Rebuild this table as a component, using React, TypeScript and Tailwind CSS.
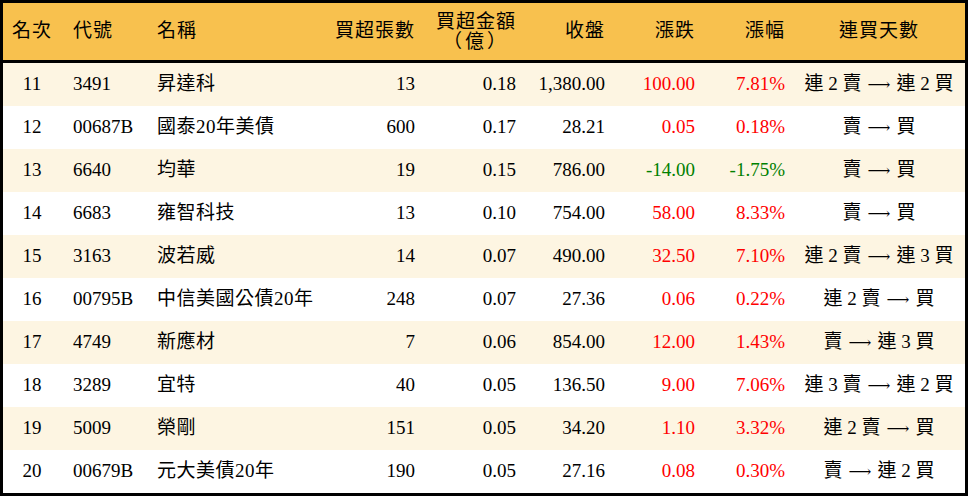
import React from "react";

type Row = {
  rank: number;
  code: string;
  name: string;
  lots: string;
  amount: string;
  close: string;
  change: string;
  pct: string;
  from: string;
  to: string;
};

const rows: Row[] = [
  { rank: 11, code: "3491", name: "昇達科", lots: "13", amount: "0.18", close: "1,380.00", change: "100.00", pct: "7.81%", from: "連 2 賣", to: "連 2 買" },
  { rank: 12, code: "00687B", name: "國泰20年美債", lots: "600", amount: "0.17", close: "28.21", change: "0.05", pct: "0.18%", from: "賣", to: "買" },
  { rank: 13, code: "6640", name: "均華", lots: "19", amount: "0.15", close: "786.00", change: "-14.00", pct: "-1.75%", from: "賣", to: "買" },
  { rank: 14, code: "6683", name: "雍智科技", lots: "13", amount: "0.10", close: "754.00", change: "58.00", pct: "8.33%", from: "賣", to: "買" },
  { rank: 15, code: "3163", name: "波若威", lots: "14", amount: "0.07", close: "490.00", change: "32.50", pct: "7.10%", from: "連 2 賣", to: "連 3 買" },
  { rank: 16, code: "00795B", name: "中信美國公債20年", lots: "248", amount: "0.07", close: "27.36", change: "0.06", pct: "0.22%", from: "連 2 賣", to: "買" },
  { rank: 17, code: "4749", name: "新應材", lots: "7", amount: "0.06", close: "854.00", change: "12.00", pct: "1.43%", from: "賣", to: "連 3 買" },
  { rank: 18, code: "3289", name: "宜特", lots: "40", amount: "0.05", close: "136.50", change: "9.00", pct: "7.06%", from: "連 3 賣", to: "連 2 買" },
  { rank: 19, code: "5009", name: "榮剛", lots: "151", amount: "0.05", close: "34.20", change: "1.10", pct: "3.32%", from: "連 2 賣", to: "買" },
  { rank: 20, code: "00679B", name: "元大美債20年", lots: "190", amount: "0.05", close: "27.16", change: "0.08", pct: "0.30%", from: "賣", to: "連 2 買" },
];

export default function App() {
  return (
    <div
      className="w-[968px] h-[496px] border-[3px] border-black bg-white text-black text-[19px] overflow-hidden whitespace-nowrap"
      style={{ fontFamily: "'Liberation Serif', 'Noto Sans CJK TC', serif" }}
    >
      <div className="flex h-[60px] items-center bg-[#f8c14e] border-b-[3px] border-black tracking-[1px]">
        <div className="w-[58px] text-center">名次</div>
        <div className="w-[94px] pl-[12px]">代號</div>
        <div className="w-[150px] pl-[2px]">名稱</div>
        <div className="w-[110px] text-right">買超張數</div>
        <div className="w-[101px] flex justify-end">
          <div className="flex flex-col items-center leading-[20px]">
            <span>買超金額</span>
            <span className="tracking-[3px]">（億）</span>
          </div>
        </div>
        <div className="w-[89px] text-right">收盤</div>
        <div className="w-[90px] text-right">漲跌</div>
        <div className="w-[90px] text-right">漲幅</div>
        <div className="flex-1 pl-[8px] text-center">連買天數</div>
      </div>

      {rows.map((row, i) => {
        const color = row.change.startsWith("-") ? "text-[#008000]" : "text-[#ff0000]";
        return (
          <div
            key={row.rank}
            className={`flex h-[43px] items-center ${i % 2 === 0 ? "bg-[#fdf5e2]" : "bg-white"}`}
          >
            <div className="w-[58px] text-center">{row.rank}</div>
            <div className="w-[94px] pl-[12px]">{row.code}</div>
            <div className="w-[150px] pl-[2px] tracking-[0.5px]">{row.name}</div>
            <div className="w-[110px] text-right">{row.lots}</div>
            <div className="w-[101px] text-right">{row.amount}</div>
            <div className="w-[89px] text-right">{row.close}</div>
            <div className={`w-[90px] text-right ${color}`}>{row.change}</div>
            <div className={`w-[90px] text-right ${color}`}>{row.pct}</div>
            <div className="flex-1 pl-[8px] flex items-center justify-center whitespace-pre">
              <span>{row.from}</span>
              <span className="mx-[6px] text-[16px]" style={{ fontFamily: "'DejaVu Serif', serif" }}>
                ⟶
              </span>
              <span>{row.to}</span>
            </div>
          </div>
        );
      })}
    </div>
  );
}
